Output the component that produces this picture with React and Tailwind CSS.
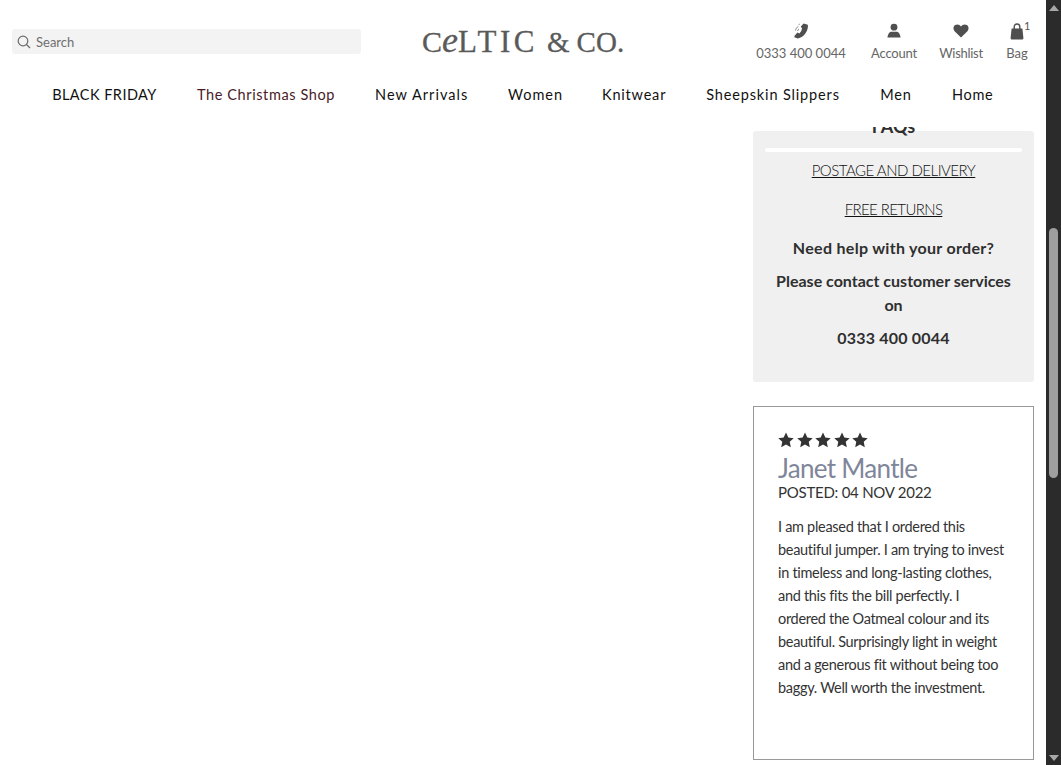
import React from 'react';

const font = { fontFamily: 'Lato, sans-serif' };

const navItems = [
  { label: 'BLACK FRIDAY', cls: 'w-[105px] tracking-[0.45px] text-[#111]' },
  { label: 'The Christmas Shop', cls: 'w-[138px] tracking-[0.6px] text-[#4a1a26]' },
  { label: 'New Arrivals', cls: 'w-[93px] tracking-[1.05px] text-[#111]' },
  { label: 'Women', cls: 'w-[54px] tracking-[1px] text-[#111]' },
  { label: 'Knitwear', cls: 'w-[64px] tracking-[0.8px] text-[#111]' },
  { label: 'Sheepskin Slippers', cls: 'w-[134px] tracking-[0.85px] text-[#111]' },
  { label: 'Men', cls: 'w-[32px] tracking-[0.9px] text-[#111]' },
  { label: 'Home', cls: 'w-[41px] tracking-[0.7px] text-[#111]' },
];

const reviewLines = [
  'I am pleased that I ordered this',
  'beautiful jumper. I am trying to invest',
  'in timeless and long-lasting clothes,',
  'and this fits the bill perfectly. I',
  'ordered the Oatmeal colour and its',
  'beautiful. Surprisingly light in weight',
  'and a generous fit without being too',
  'baggy. Well worth the investment.',
];

const PhoneIcon = () => (
  <svg width="16" height="16" viewBox="0 0 16 16" fill="#4f4f4f">
    <path d="M10.6.6 14.8 1.8C15.8 7 11 14.8 4.8 15.4L1.4 14.2V13L4.4 9.4 6.4 10.4C7.8 9.2 8.8 7.4 9 5.6L7.8 3.6Z" />
    <path d="M2.6 7.6C2.7 5.8 3.7 4.3 5.3 3.4M4.6 8C4.7 7.1 5.2 6.4 6 5.9M5.6 1.6 6.8 1.1" fill="none" stroke="#8a8a8a" strokeWidth="1" />
  </svg>
);

const PersonIcon = () => (
  <svg width="16" height="16" viewBox="0 0 16 16" fill="#4f4f4f">
    <circle cx="8" cy="4.2" r="3.4" />
    <path d="M4.6 8.8H11.4C13 9.4 14.2 11.6 14.6 14.6H1.4C1.8 11.6 3 9.4 4.6 8.8Z" />
  </svg>
);

const HeartIcon = () => (
  <svg width="16" height="14" viewBox="0 0 16 14" fill="#4f4f4f">
    <path d="M8 13.6 1.6 7.2C-.2 5.2.2 2.2 2.2 1 4.2-.2 6.8.4 8 2.6 9.2.4 11.8-.2 13.8 1c2 1.2 2.4 4.2.6 6.2Z" />
  </svg>
);

const BagIcon = () => (
  <svg width="14" height="17" viewBox="0 0 14 17" fill="#4f4f4f">
    <path d="M1.6 5.6H12.4L13.4 15C13.4 16 12.8 16.6 11.8 16.6H2.2C1.2 16.6.6 16 .6 15Z" />
    <path d="M4.2 7V3.8C4.2 2.2 5.4 1 7 1S9.8 2.2 9.8 3.8V7" fill="none" stroke="#4f4f4f" strokeWidth="1.4" />
  </svg>
);

const SearchIcon = () => (
  <svg width="14" height="14" viewBox="0 0 14 14" fill="none" stroke="#6b6b6b" strokeWidth="1.2">
    <circle cx="6" cy="6" r="4.8" />
    <path d="M9.5 9.5 13 13" />
  </svg>
);

const StarIcon = () => (
  <svg width="16" height="16" viewBox="0 0 24 24" fill="#333">
    <path d="M12 .8 15.5 8.2 23.6 9.2 17.6 14.8 19.2 22.9 12 18.9 4.8 22.9 6.4 14.8.4 9.2 8.5 8.2Z" />
  </svg>
);

const HeaderLink = ({ icon, label, cls, labelCls = '' }) => (
  <div className={`flex flex-col items-center ${cls}`}>
    <div className="flex h-[18px] items-center justify-center">{icon}</div>
    <span className={`mt-[5px] whitespace-nowrap text-[13px] leading-[16px] text-[#666] ${labelCls}`}>{label}</span>
  </div>
);

const Scrollbar = () => (
  <div className="flex h-full w-[15px] shrink-0 flex-col items-center bg-[#2b2b2b]">
    <div className="mt-[5px] h-0 w-0 border-x-[5px] border-b-[6px] border-x-transparent border-b-[#a8a8a8]" />
    <div className="mt-[217px] h-[250px] w-[9px] rounded-[5px] bg-[#9e9e9e]" />
    <div className="mt-auto mb-[4px] h-0 w-0 border-x-[5px] border-t-[6px] border-x-transparent border-t-[#a8a8a8]" />
  </div>
);

const App = () => {
  return (
    <div className="flex h-[765px] w-full overflow-hidden bg-white" style={font}>
      <div className="flex min-w-0 flex-1 flex-col">
        {/* Header */}
        <header className="relative z-10 h-[127px] shrink-0 bg-white">
          <div className="flex h-[76px] items-start">
            <div className="ml-[12px] mt-[29px] flex h-[25px] w-[349px] items-center rounded-[3px] bg-[#f3f3f3] pl-[5px]">
              <SearchIcon />
              <span className="ml-[5px] pt-[2px] text-[13px] text-[#6f6f6f]">Search</span>
            </div>
            <div
              className="ml-[61px] mt-[24px] w-[202px] whitespace-nowrap text-[29px] leading-[36px] text-[#5a5a5a] [-webkit-text-stroke:0.3px_#5a5a5a]"
              style={{ fontFamily: '"Liberation Serif", serif' }}
            >
              <span className="text-[30px]">C</span>
              <span className="text-[36px] italic leading-[30px]">e</span>
              <span className="text-[31px] tracking-[3.5px]">LTIC</span>
              <span className="ml-[9px]">&amp;</span>
              <span className="ml-[7px]">CO.</span>
            </div>
            <div className="relative mt-[22px] h-[44px] flex-1">
              <div className="flex">
                <HeaderLink icon={<PhoneIcon />} label="0333 400 0044" cls="ml-[131px] w-[92px]" />
                <HeaderLink icon={<PersonIcon />} label="Account" cls="ml-[24px] w-[46px]" labelCls="tracking-[-0.2px]" />
                <HeaderLink icon={<HeartIcon />} label="Wishlist" cls="ml-[22px] w-[44px]" labelCls="tracking-[-0.3px]" />
                <HeaderLink icon={<BagIcon />} label="Bag" cls="ml-[22px] w-[24px]" />
              </div>
              <span className="absolute left-[400px] -top-[2px] text-[11px] leading-[12px] text-[#555]">1</span>
            </div>
          </div>
          <nav className="flex items-center gap-10 pl-[52px]">
            {navItems.map((item) => (
              <a
                key={item.label}
                href="#"
                className={`${item.cls} whitespace-nowrap text-center text-[14.5px] leading-[38px]`}
              >
                {item.label}
              </a>
            ))}
          </nav>
        </header>

        {/* Sidebar */}
        <main className="flex flex-1 justify-end pr-[12px]">
          <aside className="w-[281px]">
            <div className="mt-[4px] flow-root h-[251px] rounded-[3px] bg-[#f0f0f0] px-[12px] text-center text-[#2f2f2f]">
              <h3 className="-mt-[14px] text-[18px] font-bold leading-[18px]">FAQs</h3>
              <div className="mt-[13px] h-[4px] rounded-[2px] bg-white" />
              <a href="#" className="mt-[7px] block text-[15px] font-light leading-[22px] tracking-[-0.5px] text-[#111] underline">POSTAGE AND DELIVERY</a>
              <a href="#" className="mt-[17px] block text-[15px] font-light leading-[22px] tracking-[-0.6px] text-[#111] underline">FREE RETURNS</a>
              <p className="mt-[17px] text-[16px] font-bold leading-[22px] tracking-[0.3px]">Need help with your order?</p>
              <p className="mt-[10px] text-[16px] font-bold leading-[24px]">
                Please contact customer services
                <br />
                on
              </p>
              <p className="mt-[10px] text-[16px] font-bold leading-[22px] tracking-[0.2px]">0333 400 0044</p>
            </div>

            <div className="mt-[24px] h-[354px] border border-[#999] pl-[24px] pt-[25px]">
              <div className="flex gap-[2.5px]">
                <StarIcon />
                <StarIcon />
                <StarIcon />
                <StarIcon />
                <StarIcon />
              </div>
              <div className="mt-[4px] text-[26px] leading-[32px] tracking-[-0.7px] text-[#80869a]">Janet Mantle</div>
              <div className="-mt-[2px] text-[15px] leading-[20px] tracking-[-0.25px] text-[#333]">POSTED: 04 NOV 2022</div>
              <div className="mt-[13px]">
                {reviewLines.map((line) => (
                  <div key={line} className="whitespace-nowrap text-[14.5px] leading-[23px] tracking-[-0.3px] text-[#333]">{line}</div>
                ))}
              </div>
            </div>
          </aside>
        </main>
      </div>
      <Scrollbar />
    </div>
  );
};

export default App;
